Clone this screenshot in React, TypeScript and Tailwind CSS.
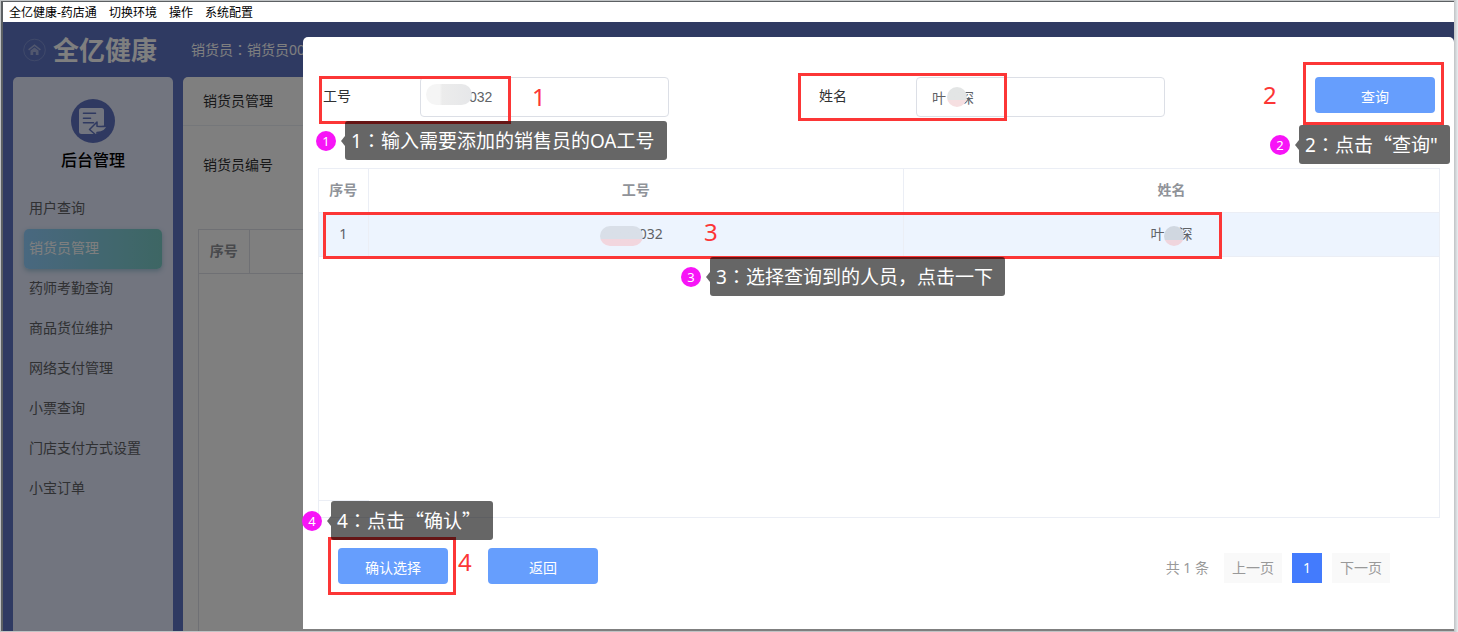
import { useState, type ReactNode } from 'react';
import clsx from 'clsx';

const MENU_BAR = ['全亿健康-药店通', '切换环境', '操作', '系统配置'];

const SIDE_MENU = [
  '用户查询',
  '销货员管理',
  '药师考勤查询',
  '商品货位维护',
  '网络支付管理',
  '小票查询',
  '门店支付方式设置',
  '小宝订单',
];

/** Full-width colon, centred in its cell */
function Colon() {
  return <span className="font-['Noto_Sans_CJK_TC',sans-serif]">：</span>;
}

/** Full-width quotation mark */
function Quote({ children }: { children: ReactNode }) {
  return <span className="font-['Noto_Sans_CJK_SC',sans-serif]">{children}</span>;
}

/** Red frame around a step's target */
function Frame({ className }: { className: string }) {
  return <div className={clsx('pointer-events-none absolute border-3 border-[#fc3636]', className)} />;
}

function StepNumber({ className, children }: { className: string; children: ReactNode }) {
  return (
    <span className={clsx('pointer-events-none absolute text-2xl leading-8 text-[#fc3636]', className)}>
      {children}
    </span>
  );
}

/** Pink badge with the dark hint box beside it */
function Hint({ step, className, children }: { step: number; className: string; children: ReactNode }) {
  return (
    <div className={clsx('pointer-events-none absolute z-10 flex items-center whitespace-nowrap', className)}>
      <span className="mr-[5px] flex size-5 items-center justify-center rounded-full bg-[#f714f7] text-[13px] leading-5 text-white">
        {step}
      </span>
      <span className="h-0 w-0 border-y-5 border-r-4 border-y-transparent border-r-black/60" />
      <span className="rounded-[3px] bg-black/60 pr-3 pl-1.5 text-[19px] leading-[38px] text-white">
        {step}
        <Colon />
        {children}
      </span>
    </div>
  );
}

function HomeIcon() {
  return (
    <svg viewBox="0 0 24 24" className="size-6" fill="none" aria-hidden="true">
      <circle cx="11.500" cy="12" r="10.800" stroke="#8f9fd8" strokeOpacity="0.7" />
      <path d="M5.600 11.800 11.500 7.200l5.900 4.600" stroke="#a3afdc" strokeWidth="1.500" />
      <path d="M7.500 12.400 11.500 9.400l4 3V17h-2.700v-3h-2.600v3H7.500z" fill="#a3afdc" />
    </svg>
  );
}

function BackOfficeIcon() {
  return (
    <svg viewBox="0 0 44 44" className="size-11" aria-hidden="true">
      <circle cx="22" cy="22" r="22" fill="#5e72c2" />
      <path d="M10.500 9h20A2.500 2.500 0 0 1 33 11.500V27l-7 8H10.500A2.500 2.500 0 0 1 8 32.500v-21A2.500 2.500 0 0 1 10.500 9z" fill="#e4eafe" />
      <path d="M12.500 14.300h12M12.500 19.200h7M12.500 23.800h10" stroke="#5e72c2" strokeWidth="1.600" strokeLinecap="round" />
      <path
        d="M18.500 30.500 26 23v4.200c4 .6 7.500.3 10-.5-.5 4-4 6.800-10 6.800V37z"
        fill="#e4eafe"
        stroke="#5e72c2"
        strokeWidth="1.500"
        strokeLinejoin="round"
      />
    </svg>
  );
}

function Sidebar() {
  const [active, setActive] = useState('销货员管理');

  return (
    <aside className="flex w-40 shrink-0 flex-col rounded-t-[5px] bg-[#e4eafe] pt-[22px]">
      <div className="flex flex-col items-center">
        <BackOfficeIcon />
        <h2 className="mt-1 text-base leading-[26px] font-medium text-black">后台管理</h2>
      </div>
      <nav className="mt-4 flex flex-col px-[11px]">
        {SIDE_MENU.map(item => (
          <button
            key={item}
            type="button"
            onClick={() => setActive(item)}
            className={clsx(
              'h-10 rounded-[5px] pb-0.5 pl-[5px] text-left text-sm',
              item === active
                ? 'bg-linear-to-r from-[#92d0ff] to-[#7bcdc8] text-white shadow-[0_2px_5px_#9fc4da]'
                : 'text-[#606266]'
            )}
          >
            {item}
          </button>
        ))}
      </nav>
    </aside>
  );
}

/** Page behind the dialog */
function SalesStaffPage() {
  return (
    <main className="flex min-w-0 flex-1 flex-col rounded-t-[5px] bg-white">
      <h1 className="border-b border-[#ebeef5] px-5 text-sm leading-[48px] text-[#303133]">销货员管理</h1>
      <label htmlFor="staff-code" className="mt-[19px] px-5 text-sm leading-10 text-[#303133]">
        销货员编号
      </label>
      <div className="mt-11 ml-[15px] flex-1 border-t border-l border-[#dfe1e8]">
        <table className="w-full text-sm text-[#909399]">
          <thead>
            <tr className="h-[43px] border-b border-[#dfe1e8]">
              <th className="w-[50px] border-r border-[#dfe1e8] font-bold">序号</th>
              <th />
            </tr>
          </thead>
        </table>
      </div>
    </main>
  );
}

function SearchForm() {
  const [code, setCode] = useState('032');
  const [name, setName] = useState('叶　深');

  const inputClass =
    'h-10 w-[249px] rounded-[4px] border border-[#dcdfe6] bg-white text-sm text-[#606266] outline-none';

  return (
    <form className="flex items-start justify-between px-[5px]" onSubmit={e => e.preventDefault()}>
      <div className="relative flex">
        <label htmlFor="code" className="w-[97px] text-sm leading-[38px] text-[#303133]">
          工号
        </label>
        <input
          id="code"
          value={code}
          onChange={e => setCode(e.target.value)}
          className={clsx(inputClass, "pl-12 font-['Liberation_Sans',sans-serif]")}
        />
        <span className="absolute top-[7px] left-[103px] h-[21px] w-[46px] rounded-full bg-linear-to-r from-[#f5f5f5] from-30% via-[#ececec] via-35% to-[#e6e7e9]" />
        <Frame className="-top-px -left-1 h-12 w-48" />
        <StepNumber className="top-1 left-[209px]">1</StepNumber>
        <Hint step={1} className="top-11 -left-[7px]">
          输入需要添加的销售员的OA工号
        </Hint>
      </div>

      <div className="relative flex">
        <label htmlFor="name" className="w-[97px] text-sm leading-[38px] text-[#303133]">
          姓名
        </label>
        <input
          id="name"
          value={name}
          onChange={e => setName(e.target.value)}
          className={clsx(inputClass, 'pl-[15px]')}
        />
        <span className="absolute top-2.5 left-[128px] size-5 rounded-full bg-linear-to-b from-[#e3e5e5] from-65% to-[#f6dfe1] to-65%" />
        <Frame className="-top-1 -left-[21px] h-12 w-[209px]" />
      </div>

      <div className="relative">
        <button type="submit" className="h-9 w-[120px] rounded-[4px] bg-[#669efd] pt-1 text-sm text-white">
          查询
        </button>
        <Frame className="-top-[15px] -left-3 h-[63px] w-[141px]" />
        <StepNumber className="top-0.5 -left-[52px]">2</StepNumber>
        <Hint step={2} className="top-12 -left-[45px]">
          点击<Quote>“</Quote>查询"
        </Hint>
      </div>
    </form>
  );
}

function StaffTable() {
  const cell = 'border-r border-b border-[#ebeef5] last:border-r-0';

  return (
    <div className="relative flex-1 border border-[#ebeef5]">
      <table className="w-full table-fixed text-center text-sm">
        <thead className="text-[#909399]">
          <tr className="h-[43px]">
            <th className={clsx(cell, 'w-[49px] font-bold')}>序号</th>
            <th className={clsx(cell, 'font-bold')}>工号</th>
            <th className={clsx(cell, 'font-bold')}>姓名</th>
          </tr>
        </thead>
        <tbody className="text-[#606266]">
          <tr className="h-11 cursor-pointer bg-[#edf4fe]">
            <td className={cell}>1</td>
            <td className={cell}>
              <span className="relative inline-block pl-[30px]">
                032
                <span className="absolute top-0.5 -left-[9px] h-5 w-[43px] rounded-full bg-linear-to-b from-[#d9dfe8] from-65% to-[#f2d6de] to-65%" />
              </span>
            </td>
            <td className={cell}>
              <span className="relative inline-block">
                叶　深
                <span className="absolute top-0.5 left-[13px] size-5 rounded-full bg-linear-to-b from-[#d0d7e0] from-70% to-[#f0d5dd] to-70%" />
              </span>
            </td>
          </tr>
        </tbody>
      </table>
      <div className="absolute bottom-4 left-0 w-[50px] border-b border-[#ebeef5]" />
      <Frame className="top-[43px] right-[217px] left-1 h-[47px]" />
      <StepNumber className="top-[47px] left-[385px]">3</StepNumber>
      <Hint step={3} className="top-[88px] left-[362px]">
        选择查询到的人员，点击一下
      </Hint>
    </div>
  );
}

function Pagination() {
  return (
    <div className="mb-px flex items-center gap-2.5 text-sm text-[#999999]">
      <span className="mr-[5px]">共 1 条</span>
      <button type="button" className="h-[30px] bg-[#f9f9f9] px-2">
        上一页
      </button>
      <button type="button" className="size-[30px] bg-[#437bfd] text-white">
        1
      </button>
      <button type="button" className="h-[30px] bg-[#f9f9f9] px-2">
        下一页
      </button>
    </div>
  );
}

function StaffDialog() {
  const buttonClass = 'h-9 w-[110px] rounded-[4px] bg-[#669efd] pt-1 text-sm text-white';

  return (
    <div
      role="dialog"
      aria-label="选择人员"
      className="absolute top-[15px] right-0 bottom-0.5 left-[300px] flex flex-col rounded-t-[5px] bg-white pt-10 pr-3.5 pb-[45px] pl-[15px]"
    >
      <SearchForm />
      <div className="mt-[51px] flex flex-1">
        <StaffTable />
      </div>
      <div className="mt-[30px] flex items-end justify-between pr-[50px] pl-5">
        <div className="flex gap-10">
          <div className="relative">
            <button type="button" className={buttonClass}>
              确认选择
            </button>
            <Frame className="-top-[11px] -left-2.5 h-[58px] w-32" />
            <StepNumber className="-top-0.5 left-[120px]">4</StepNumber>
            <Hint step={4} className="-top-[47px] -left-9">
              点击<Quote>“</Quote>确认<Quote>”</Quote>
            </Hint>
          </div>
          <button type="button" className={buttonClass}>
            返回
          </button>
        </div>
        <Pagination />
      </div>
    </div>
  );
}

export default function App() {
  return (
    <div className="h-screen overflow-hidden bg-linear-to-l from-[#e9eef1] to-[#c0c3c5] to-[4px] pt-px pr-1 pb-px pl-px font-['Noto_Sans','Noto_Sans_CJK_SC',sans-serif]">
      <div className="flex h-full flex-col border-t border-l-2 border-[#5c6063]">
        <header className="flex h-5 shrink-0 gap-3 bg-white pt-px pl-1.5 text-xs leading-5 text-black">
          {MENU_BAR.map(item => (
            <button key={item} type="button">
              {item}
            </button>
          ))}
        </header>

        <div className="relative flex min-h-0 flex-1 flex-col bg-[#5e74c5]">
          <div className="flex h-[55px] shrink-0 items-center pl-5 text-white">
            <HomeIcon />
            <span className="ml-1.5 text-[26px] leading-8 font-bold">全亿健康</span>
            <span className="ml-[34px] text-sm">
              销货员<Colon />销货员001
            </span>
          </div>
          <div className="flex min-h-0 flex-1 gap-2.5 pl-2.5">
            <Sidebar />
            <SalesStaffPage />
          </div>

          <div className="absolute inset-0 bg-black/50" />
          <StaffDialog />
        </div>
      </div>
    </div>
  );
}
